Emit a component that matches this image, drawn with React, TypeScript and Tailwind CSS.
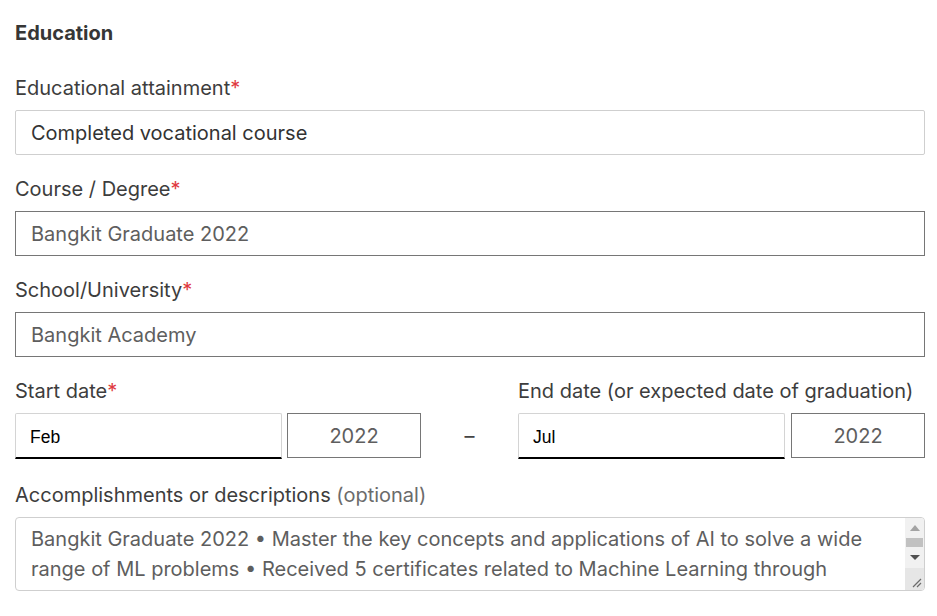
import React from 'react';

const font = { fontFamily: 'Inter, "Noto Sans", sans-serif' };

function Label({ text, required, optional }: { text: string; required?: boolean; optional?: boolean }) {
    return (
        <div className="h-[21px] text-[20px] leading-[21px] text-[#3d3d3d] whitespace-nowrap">
            {text}
            {required && <span className="text-[#e0393e]">*</span>}
            {optional && <span className="text-[#6b6b6b]"> (optional)</span>}
        </div>
    );
}

function TextField({ value, light }: { value: string; light?: boolean }) {
    return (
        <input
            readOnly
            value={value}
            className={`block w-full h-[45px] px-[15px] text-[20px] outline-none bg-white ${
                light ? 'border border-[#cfcfcf] rounded-[2px] text-[#333]' : 'border border-[#767676] text-[#5e5e5e]'
            }`}
            style={font}
        />
    );
}

function DateGroup({ month, year, wide }: { month: string; year: string; wide?: boolean }) {
    return (
        <div className={wide ? 'flex gap-[6px]' : 'flex gap-[5px]'}>
            <div
                className="w-[267px] h-[46px] flex items-center pl-[14px] pt-[3px] border border-[#d4d4d4] border-b-2 border-b-black rounded-t-[2px] bg-white text-[17.5px] text-black"
                style={{ fontFamily: '"Liberation Sans", Arial, sans-serif' }}
            >
                {month}
            </div>
            <div className="w-[134px] h-[45px] flex items-center justify-center border border-[#767676] text-[20px] text-[#5e5e5e]">
                {year}
            </div>
        </div>
    );
}

function FakeScrollbar() {
    return (
        <div className="w-[19px] flex flex-col bg-[#f1f1f1]">
            <div className="h-[50px] flex flex-col items-center">
                <svg width="10" height="6" viewBox="0 0 10 6" className="mt-[7px]">
                    <path d="M5 0 L10 6 L0 6 Z" fill="#a3a3a3" />
                </svg>
                <div className="mt-[7px] w-[17px] h-[9px] bg-[#c1c1c1]" />
                <svg width="10" height="5" viewBox="0 0 10 5" className="mt-[8px]">
                    <path d="M0 0 L10 0 L5 5 Z" fill="#505050" />
                </svg>
            </div>
            <div className="flex-1 bg-[#e6e6e6] relative">
                <svg width="12" height="12" viewBox="0 0 12 12" className="absolute right-[2px] bottom-[2px]">
                    <path d="M11 3 L3 11 M11 7 L7 11" stroke="#6b6b6b" strokeWidth="1.2" />
                </svg>
            </div>
        </div>
    );
}

export default function App() {
    return (
        <div className="min-h-[616px] bg-white" style={font}>
            <div className="ml-[15px] w-[910px] pt-[21px]">
                <h2 className="text-[20px] leading-6 font-bold text-[#363636]">Education</h2>

                <div className="mt-[33px]">
                    <Label text="Educational attainment" required />
                    <div className="mt-[11px]">
                        <TextField value="Completed vocational course" light />
                    </div>
                </div>

                <div className="mt-[24px]">
                    <Label text="Course / Degree" required />
                    <div className="mt-[11px]">
                        <TextField value="Bangkit Graduate 2022" />
                    </div>
                </div>

                <div className="mt-[24px]">
                    <Label text="School/University" required />
                    <div className="mt-[11px]">
                        <TextField value="Bangkit Academy" />
                    </div>
                </div>

                <div className="mt-[24px] flex">
                    <div>
                        <Label text="Start date" required />
                        <div className="mt-[11px]">
                            <DateGroup month="Feb" year="2022" />
                        </div>
                    </div>
                    <div className="flex-1 flex justify-center pt-[32px]">
                        <span className="h-[45px] flex items-center text-[20px] text-[#444]">–</span>
                    </div>
                    <div className="w-[407px]">
                        <Label text="End date (or expected date of graduation)" />
                        <div className="mt-[11px]">
                            <DateGroup month="Jul" year="2022" wide />
                        </div>
                    </div>
                </div>

                <div className="mt-[26px]">
                    <Label text="Accomplishments or descriptions" optional />
                    <div className="mt-[11px] h-[74px] flex border border-[#cfcfcf] rounded-[4px] overflow-hidden bg-white">
                        <textarea
                            readOnly
                            className="flex-1 resize-none overflow-hidden outline-none pl-[15px] pr-2 pt-[6px] text-[20px] leading-[30px] text-[#5e5e5e]"
                            style={font}
                            value="Bangkit Graduate 2022 • Master the key concepts and applications of AI to solve a wide range of ML problems • Received 5 certificates related to Machine Learning through Coursera and Dicoding • Completed a capstone project"
                        />
                        <FakeScrollbar />
                    </div>
                </div>
            </div>
        </div>
    );
}
